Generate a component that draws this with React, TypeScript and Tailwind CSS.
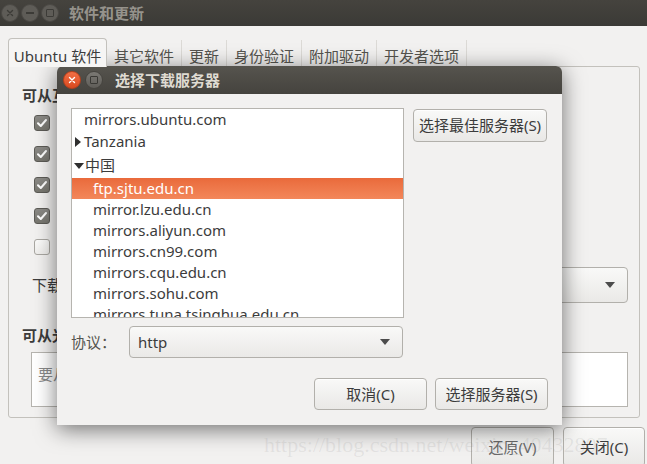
import React from 'react';

const cjk = "font-['Noto_Sans','Noto_Sans_CJK_SC',sans-serif]";

const tabs = [
  { label: '其它软件', w: 'w-[75px]' },
  { label: '更新', w: 'w-[45px]' },
  { label: '身份验证', w: 'w-[75px]' },
  { label: '附加驱动', w: 'w-[75px]' },
  { label: '开发者选项', w: 'w-[90px]' },
];

const sources = [
  { checked: true, label: 'Canonical 支持的免费和开源软件 (main)' },
  { checked: true, label: '社区维护的免费和开源软件 (universe)' },
  { checked: true, label: '设备的专有驱动 (restricted)' },
  { checked: true, label: '有版权和合法性问题的软件 (multiverse)' },
  { checked: false, label: '源代码' },
];

const mirrors = [
  'mirror.lzu.edu.cn',
  'mirrors.aliyun.com',
  'mirrors.cn99.com',
  'mirrors.cqu.edu.cn',
  'mirrors.sohu.com',
  'mirrors.tuna.tsinghua.edu.cn',
];

const Check: React.FC<{ checked: boolean }> = ({ checked }) =>
  checked ? (
    <div className="w-[16px] h-[16px] rounded-[3px] bg-gradient-to-b from-[#8c8b87] to-[#77766f] border border-[#5c5b56] flex items-center justify-center">
      <svg width="12" height="12" viewBox="0 0 12 12">
        <path d="M2 6.2 L4.8 9 L10 3" fill="none" stroke="#fff" strokeWidth="2" strokeLinecap="round" strokeLinejoin="round" />
      </svg>
    </div>
  ) : (
    <div className="w-[16px] h-[16px] rounded-[3px] bg-gradient-to-b from-[#fbfbfa] to-[#efeeec] border border-[#a9a7a2]" />
  );

const Arrow: React.FC = () => (
  <svg width="10" height="6" viewBox="0 0 10 6">
    <path d="M0 0 L10 0 L5 6 Z" fill="#4c4c4c" />
  </svg>
);

const Button: React.FC<{ className?: string; children: React.ReactNode }> = ({ className = '', children }) => (
  <div
    className={`shrink-0 flex items-center justify-center rounded-[4px] border border-[#b2b0ab] bg-gradient-to-b from-[#f9f9f8] to-[#e9e8e6] text-[15px] text-[#3c3c3c] shadow-[0_1px_0_rgba(255,255,255,0.8)_inset] ${className}`}
  >
    {children}
  </div>
);

const WinButtons: React.FC<{ active?: boolean }> = ({ active }) => (
  <div className="flex items-center gap-[2px]">
    <div
      className={`w-[18px] h-[18px] rounded-full flex items-center justify-center ${
        active ? 'bg-gradient-to-b from-[#f26f45] to-[#d9491e] border border-[#b8401c]' : 'bg-[#5e5c57] border border-[#4a4844]'
      }`}
    >
      <svg width="8" height="8" viewBox="0 0 8 8">
        <path d="M1.5 1.5 L6.5 6.5 M6.5 1.5 L1.5 6.5" stroke={active ? '#fff' : '#3c3b37'} strokeWidth="1.4" strokeLinecap="round" />
      </svg>
    </div>
    {!active && (
      <div className="w-[18px] h-[18px] rounded-full bg-[#5e5c57] border border-[#4a4844] flex items-center justify-center">
        <div className="w-[8px] h-[1.5px] bg-[#3c3b37]" />
      </div>
    )}
    <div
      className={`w-[18px] h-[18px] rounded-full flex items-center justify-center ${
        active ? 'ml-[2px] bg-gradient-to-b from-[#7b7974] to-[#5f5d58] border border-[#46443f]' : 'bg-[#5e5c57] border border-[#4a4844]'
      }`}
    >
      <div className={`w-[8px] h-[8px] border-[1.5px] rounded-[1px] ${active ? 'border-[#3a3935]' : 'border-[#3c3b37]'}`} />
    </div>
  </div>
);

const App: React.FC = () => {
  return (
    <div className={`relative w-[647px] h-[464px] overflow-hidden bg-[#f2f1f0] ${cjk} text-[#3c3c3c]`}>
      {/* main window */}
      <div className="h-[26px] bg-gradient-to-b from-[#45433e] to-[#3b3a36] flex items-center pl-[1px]">
        <WinButtons />
        <span className="ml-[10px] text-[15px] text-[#96938c] font-semibold">软件和更新</span>
      </div>

      <div className="flex items-end ml-[8px] mt-[12px] h-[28px]">
        <div className="w-[99px] h-[29px] pt-[6px] border border-b-0 border-[#c3c1bc] rounded-t-[4px] bg-[#f6f5f4] flex items-center justify-center text-[15px] relative top-[1px] z-10 whitespace-nowrap">
          Ubuntu 软件
        </div>
        {tabs.map((t) => (
          <div
            key={t.label}
            className={`${t.w} h-[26px] pt-[6px] border-r border-[#dcdad6] flex items-center justify-center text-[15px] text-[#55544f] whitespace-nowrap`}
          >
            {t.label}
          </div>
        ))}
      </div>

      <div className="ml-[8px] w-[632px] h-[352px] border border-[#c3c1bc] rounded-b-[3px] rounded-tr-[3px] bg-[#f2f1f0] flex flex-col pl-[13px] pr-[11px] pt-[18px]">
        <div className="text-[15px] font-bold leading-[20px] h-[20px]">可从互联网下载</div>
        <div className="flex flex-col gap-[15px] pl-[12px] mt-[10px]">
          {sources.map((s) => (
            <div key={s.label} className="flex items-center gap-[10px] h-[16px] text-[15px]">
              <Check checked={s.checked} />
              <span>{s.label}</span>
            </div>
          ))}
        </div>
        <div className="flex items-center mt-[12px] h-[36px] pl-[10px]">
          <span className="text-[15px] w-[90px]">下载自：</span>
          <div className="flex-1 h-[36px] rounded-[4px] border border-[#b2b0ab] bg-gradient-to-b from-[#f9f9f8] to-[#eae9e7] flex items-center justify-end pr-[12px]">
            <Arrow />
          </div>
        </div>
        <div className="text-[15px] font-bold mt-[22px] leading-[20px]">可从光盘安装</div>
        <div className="ml-[9px] mt-[7px] h-[55px] border border-[#b6b4af] bg-white px-[6px] pt-[10px] text-[15px] text-[#8a8a8a]">
          要从光盘安装，请插入安装光盘。
        </div>
      </div>

      <div className="flex justify-end gap-[9px] mr-[2px] mt-[9px]">
        <Button className="w-[83px] h-[40px] text-[#6a6a6a]">还原(V)</Button>
        <Button className="w-[82px] h-[40px]">关闭(C)</Button>
      </div>

      {/* dialog window */}
      <div className="absolute left-[57px] top-[66px] w-[505px] h-[359px] rounded-t-[6px] bg-[#f2f1f0] shadow-[0_4px_22px_rgba(0,0,0,0.55)] flex flex-col">
        <div className="h-[28px] rounded-t-[6px] bg-gradient-to-b from-[#56544e] to-[#45433e] flex items-center pl-[6px]">
          <WinButtons active />
          <span className="ml-[12px] text-[15px] font-bold text-[#dfdbd2]">选择下载服务器</span>
        </div>

        <div className="flex pl-[14px] pt-[14px] gap-[9px]">
          <div className="w-[333px] h-[210px] border border-[#b6b4af] bg-white overflow-hidden text-[15px] text-[#3c3c3c]">
            <div className="h-[21px] pl-[12px] flex items-center">mirrors.ubuntu.com</div>
            <div className="h-[23px] pl-[3px] flex items-center">
              <svg width="6" height="10" viewBox="0 0 6 10" className="mr-[3px]">
                <path d="M0 0 L6 5 L0 10 Z" fill="#2f2f2f" />
              </svg>
              Tanzania
            </div>
            <div className="h-[25px] pl-[2px] flex items-center">
              <svg width="10" height="6" viewBox="0 0 10 6" className="mr-[1px]">
                <path d="M0 0 L10 0 L5 6 Z" fill="#2f2f2f" />
              </svg>
              中国
            </div>
            <div className="h-[21px] pl-[21px] flex items-center bg-gradient-to-b from-[#e96a3b] to-[#f3875a] text-white">
              ftp.sjtu.edu.cn
            </div>
            {mirrors.map((m) => (
              <div key={m} className="h-[21px] pl-[21px] flex items-center">
                {m}
              </div>
            ))}
          </div>
          <Button className="w-[134px] h-[33px] mt-[1px]">选择最佳服务器(S)</Button>
        </div>

        <div className="flex items-center pl-[14px] mt-[8px] h-[32px]">
          <span className="text-[15px] text-[#55544f] w-[58px]">协议：</span>
          <div className="w-[274px] h-[32px] rounded-[4px] border border-[#b2b0ab] bg-gradient-to-b from-[#f9f9f8] to-[#eae9e7] flex items-center justify-between pl-[8px] pr-[12px] text-[15px]">
            <span>http</span>
            <Arrow />
          </div>
        </div>

        <div className="flex justify-end gap-[8px] pr-[14px] mt-[20px]">
          <Button className="w-[113px] h-[32px]">取消(C)</Button>
          <Button className="w-[113px] h-[32px]">选择服务器(S)</Button>
        </div>
      </div>

      {/* watermark */}
      <div className="absolute left-[264px] top-[428px] pointer-events-none font-['Liberation_Serif',serif] text-[22px] text-[rgba(120,120,120,0.12)] whitespace-nowrap">
        https://blog.csdn.net/weixin_40432807
      </div>
    </div>
  );
};

export default App;
